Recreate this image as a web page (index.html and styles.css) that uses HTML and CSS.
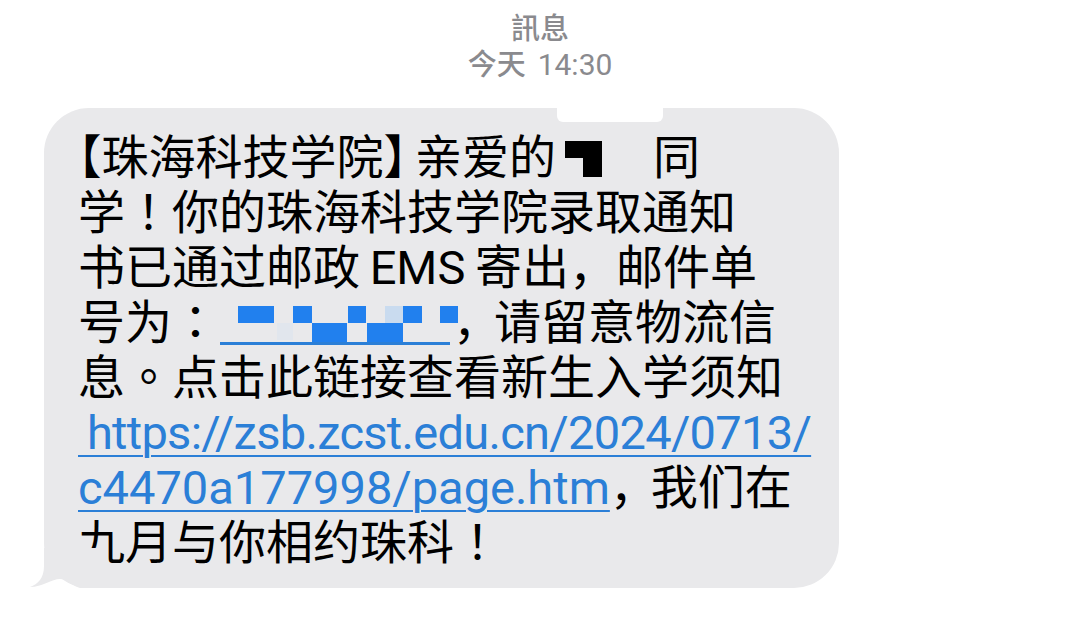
FILE: index.html
```html
<!DOCTYPE html>
<html lang="zh-CN">
<head>
<meta charset="utf-8">
<title>訊息</title>
<link rel="stylesheet" href="styles.css">
</head>
<body>
<header class="meta">
  <div class="meta-title" lang="zh-TW">訊息</div>
  <div class="meta-time">今天<span class="latin time">14:30</span></div>
</header>
<main class="thread">
  <div class="bubble">
    <span class="mask-top"></span>
    <div class="line"><span class="halt">【</span>珠海科技学院<span class="halt close">】</span>亲爱的<svg class="redact" width="37" height="36" viewBox="0 0 37 36"><rect x="0" y="0" width="37" height="17" fill="#000"/><rect x="18" y="0" width="19" height="36" fill="#000"/></svg>同</div>
    <div class="line">学<span class="pc" lang="zh-TW">！</span>你的珠海科技学院录取通知</div>
    <div class="line">书已通过邮政<span class="latin ems"> EMS </span>寄出，邮件单</div>
    <div class="line">号为<span class="pc" lang="zh-TW">：</span><svg class="tracking" width="240" height="44" viewBox="0 0 240 44"><rect x="58" y="20" width="16" height="17" fill="#e1e6ed"/><rect x="19" y="3" width="36" height="17" fill="#2180ee"/><rect x="74" y="3" width="19" height="17" fill="#2180ee"/><rect x="93" y="20" width="35" height="19" fill="#2180ee"/><rect x="129" y="3" width="18" height="17" fill="#2180ee"/><rect x="148" y="20" width="36" height="19" fill="#2180ee"/><rect x="166" y="3" width="18" height="17" fill="#c9dbef"/><rect x="184" y="3" width="19" height="17" fill="#2180ee"/><rect x="221" y="3" width="18" height="17" fill="#2180ee"/><rect x="1" y="39" width="230" height="3" fill="#2b7fd7"/></svg><span class="comma-tight">，</span>请留意物流信</div>
    <div class="line">息<span class="pc" lang="zh-TW">。</span>点击此链接查看新生入学须知</div>
    <div class="line"><a class="link link-tight">&#8201;https://zsb.zcst.edu.cn/2024/0713/</a></div>
    <div class="line"><a class="link">c4470a177998/page.htm</a><span class="comma-tight">，</span>我们在</div>
    <div class="line">九月与你相约珠科<span class="pc" lang="zh-TW">！</span></div>
    <svg class="tail" width="70" height="40" viewBox="0 0 70 40"><path d="M16 0 L16 18 C16 30 10 36 2 39 C14 39 24 31 32 31 C39 31 44 38 52 40 L70 40 L70 0 Z" fill="#e9e9eb"/></svg>
  </div>
</main>
</body>
</html>
```

FILE: styles.css
```css
* {
  box-sizing: border-box;
  margin: 0;
  padding: 0;
}

html, body {
  background: #ffffff;
}

body {
  width: 1080px;
  height: 628px;
  overflow: hidden;
  font-family: "Noto Sans CJK SC", sans-serif;
}

.meta {
  display: flex;
  flex-direction: column;
  align-items: center;
  padding-top: 8px;
  color: #8a8a8e;
  font-size: 29px;
  line-height: 36px;
  font-weight: 500;
}

.meta-title {
  font-family: "Noto Sans CJK TC", sans-serif;
}

.latin {
  font-family: Roboto, sans-serif;
}

.time {
  font-size: 30px;
  font-weight: 400;
  margin-left: 12px;
}

.thread {
  padding: 25px 0 0 44px;
}

.bubble {
  position: relative;
  width: 795px;
  background: #e9e9eb;
  border-radius: 45px;
  padding: 18px 0 22px 34px;
  font-size: 47px;
  line-height: 55px;
  color: #000;
}

.line {
  white-space: nowrap;
  height: 55px;
}

.halt {
  font-feature-settings: "halt";
}

.close {
  margin-right: 8px;
}

.pc {
  font-family: "Noto Sans CJK TC", sans-serif;
}

.ems {
  word-spacing: -2px;
}

.redact {
  vertical-align: -3px;
  margin: 0 51px 0 9px;
}

.tracking {
  vertical-align: -8px;
  margin-right: -6px;
}

.comma-tight {
  margin-right: -6px;
}

.link {
  font-family: Roboto, sans-serif;
  color: #2b7fd7;
  text-decoration: underline;
  text-decoration-thickness: 2px;
  text-underline-offset: 6px;
}

.link-tight {
  letter-spacing: -0.7px;
}

.mask-top {
  position: absolute;
  left: 513px;
  top: -13px;
  width: 106px;
  height: 27px;
  background: #ffffff;
  border-radius: 0 0 6px 6px;
}

.tail {
  position: absolute;
  left: -16px;
  bottom: 0;
}
```
